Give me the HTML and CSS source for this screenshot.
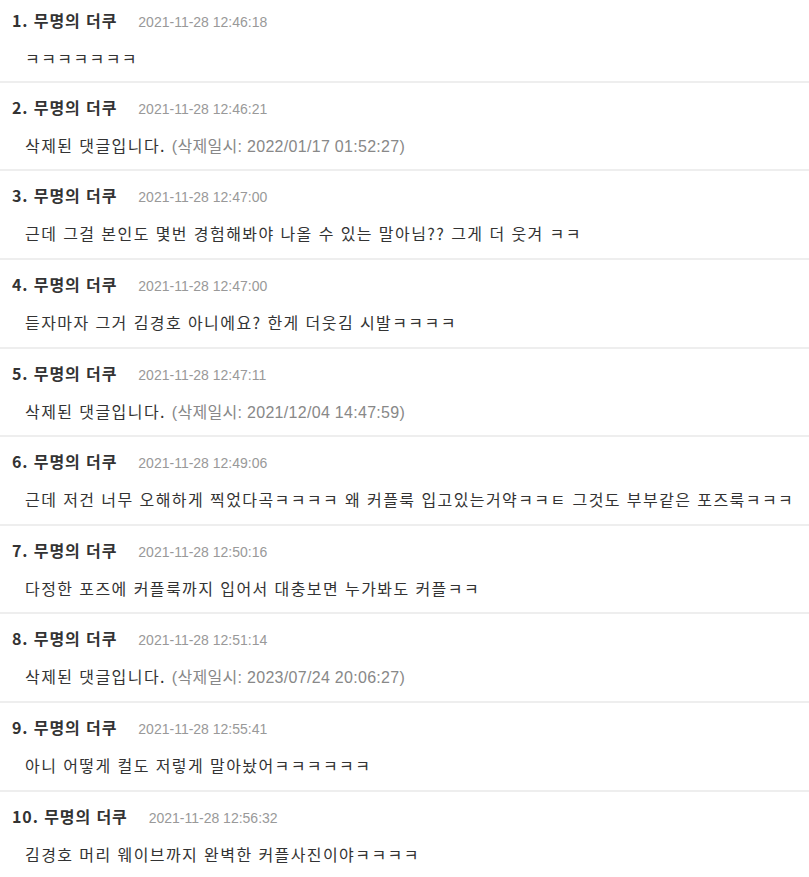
FILE: index.html
```html
<!DOCTYPE html>
<html lang="ko">
<head>
<meta charset="utf-8">
<link rel="stylesheet" href="styles.css">
</head>
<body>
<ul class="comments">
  <li class="comment">
    <div class="head"><span class="name">1. 무명의 더쿠</span><span class="date">2021-11-28 12:46:18</span></div>
    <div class="body">ㅋㅋㅋㅋㅋㅋㅋ</div>
  </li>
  <li class="comment">
    <div class="head"><span class="name">2. 무명의 더쿠</span><span class="date">2021-11-28 12:46:21</span></div>
    <div class="body">삭제된 댓글입니다. <span class="deleted">(삭제일시: 2022/01/17 01:52:27)</span></div>
  </li>
  <li class="comment">
    <div class="head"><span class="name">3. 무명의 더쿠</span><span class="date">2021-11-28 12:47:00</span></div>
    <div class="body">근데 그걸 본인도 몇번 경험해봐야 나올 수 있는 말아님?? 그게 더 웃겨 ㅋㅋ</div>
  </li>
  <li class="comment">
    <div class="head"><span class="name">4. 무명의 더쿠</span><span class="date">2021-11-28 12:47:00</span></div>
    <div class="body">듣자마자 그거 김경호 아니에요? 한게 더웃김 시발ㅋㅋㅋㅋ</div>
  </li>
  <li class="comment">
    <div class="head"><span class="name">5. 무명의 더쿠</span><span class="date">2021-11-28 12:47:11</span></div>
    <div class="body">삭제된 댓글입니다. <span class="deleted">(삭제일시: 2021/12/04 14:47:59)</span></div>
  </li>
  <li class="comment">
    <div class="head"><span class="name">6. 무명의 더쿠</span><span class="date">2021-11-28 12:49:06</span></div>
    <div class="body">근데 저건 너무 오해하게 찍었다곡ㅋㅋㅋㅋ 왜 커플룩 입고있는거약ㅋㅋㅌ 그것도 부부같은 포즈룩ㅋㅋㅋ</div>
  </li>
  <li class="comment">
    <div class="head"><span class="name">7. 무명의 더쿠</span><span class="date">2021-11-28 12:50:16</span></div>
    <div class="body">다정한 포즈에 커플룩까지 입어서 대충보면 누가봐도 커플ㅋㅋ</div>
  </li>
  <li class="comment">
    <div class="head"><span class="name">8. 무명의 더쿠</span><span class="date">2021-11-28 12:51:14</span></div>
    <div class="body">삭제된 댓글입니다. <span class="deleted">(삭제일시: 2023/07/24 20:06:27)</span></div>
  </li>
  <li class="comment">
    <div class="head"><span class="name">9. 무명의 더쿠</span><span class="date">2021-11-28 12:55:41</span></div>
    <div class="body">아니 어떻게 컬도 저렇게 말아놨어ㅋㅋㅋㅋㅋㅋ</div>
  </li>
  <li class="comment">
    <div class="head"><span class="name">10. 무명의 더쿠</span><span class="date">2021-11-28 12:56:32</span></div>
    <div class="body">김경호 머리 웨이브까지 완벽한 커플사진이야ㅋㅋㅋㅋ</div>
  </li>
</ul>
</body>
</html>
```
FILE: styles.css
```css
html, body {
  margin: 0;
  padding: 0;
  background: #fff;
}
body {
  font-family: "Noto Sans CJK KR", "Liberation Sans", sans-serif;
  color: #333;
}
.comments {
  list-style: none;
  margin: 0;
  padding: 0;
}
.comment {
  padding: 12px 12px 12.625px;
  border-bottom: 2px solid #eee;
}
.comment:first-child {
  padding-top: 8px;
  padding-bottom: 10.625px;
}
.comment:last-child {
  border-bottom: none;
}
.head {
  display: flex;
  align-items: baseline;
  gap: 21px;
  height: 24px;
  line-height: 24px;
  overflow: hidden;
}
.name {
  font-size: 16px;
  font-weight: bold;
  letter-spacing: 0.9px;
  color: #333;
}
.date {
  font-family: "Liberation Sans", "Noto Sans CJK KR", sans-serif;
  font-size: 14px;
  color: #999;
}
.body {
  margin-top: 14px;
  padding-left: 13px;
  height: 24px;
  font-size: 16px;
  letter-spacing: 1.42px;
  line-height: 24px;
  white-space: nowrap;
}
.deleted {
  font-family: "Liberation Sans", "Noto Sans CJK KR", sans-serif;
  letter-spacing: 0.3px;
  color: #888;
}
```
